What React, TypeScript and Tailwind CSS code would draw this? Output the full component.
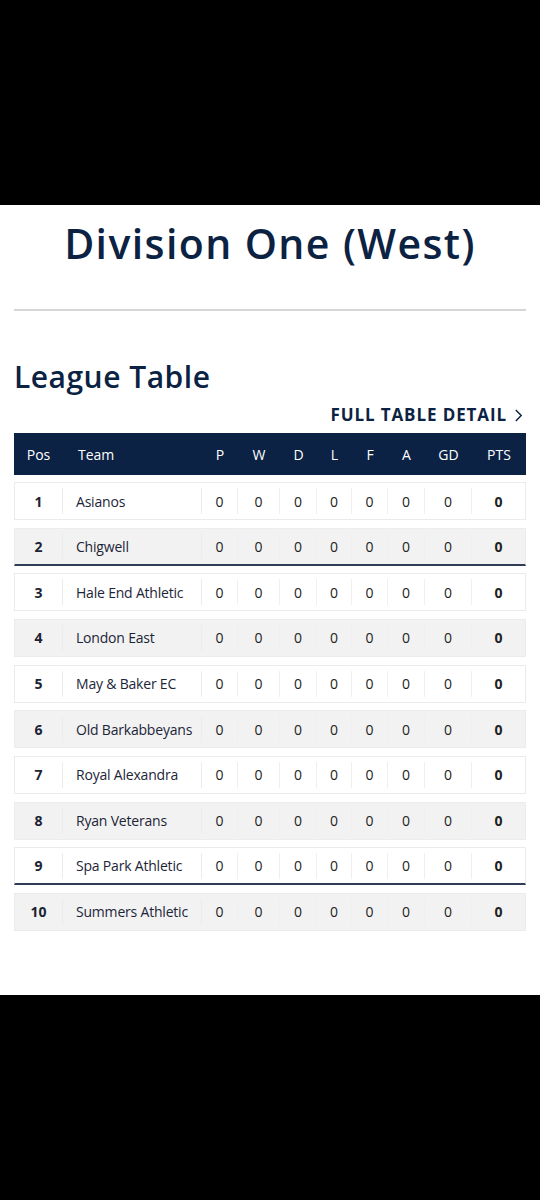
import React from "react";

const TEAMS = [
  "Asianos",
  "Chigwell",
  "Hale End Athletic",
  "London East",
  "May & Baker EC",
  "Old Barkabbeyans",
  "Royal Alexandra",
  "Ryan Veterans",
  "Spa Park Athletic",
  "Summers Athletic",
];

// column widths read off the reference: P W D L F A GD PTS
const STAT_COLS = [
  { key: "P", w: "w-[36px]" },
  { key: "W", w: "w-[42px]" },
  { key: "D", w: "w-[37px]" },
  { key: "L", w: "w-[35px]" },
  { key: "F", w: "w-[36px]" },
  { key: "A", w: "w-[37px]" },
  { key: "GD", w: "w-[47px]" },
  { key: "PTS", w: "flex-1" },
];

function Row({ pos, team }: { pos: number; team: string }) {
  const even = pos % 2 === 0;
  const lineBelow = pos === 2 || pos === 9;
  return (
    <div
      className={
        "flex h-[38px] items-center border text-[14px] " +
        (even ? "bg-[#f2f2f2] border-[#ececec] " : "bg-white border-[#ebebeb] ") +
        (lineBelow ? "border-b-2 border-b-[#2f3d57]" : "")
      }
    >
      <div className="w-[48px] h-[26px] flex items-center justify-center font-bold text-[#1c2333] border-r border-[#ececec]">
        {pos}
      </div>
      <div className="w-[139px] h-[26px] flex items-center pl-[13px] text-[#1c2538] tracking-[-0.2px] border-r border-[#ececec]">
        {team}
      </div>
      {STAT_COLS.map((c, i) => (
        <div
          key={c.key}
          className={
            c.w +
            " h-[26px] flex items-center justify-center text-[#222] " +
            (i < STAT_COLS.length - 1 ? "border-r border-[#efefef] " : "") +
            (c.key === "PTS" ? "font-bold" : "")
          }
        >
          0
        </div>
      ))}
    </div>
  );
}

export default function App() {
  return (
    <div
      className="bg-black h-[1200px] flex flex-col"
      style={{ fontFamily: '"Open Sans", "Noto Sans", sans-serif' }}
    >
      <div className="h-[205px]"></div>

      <section className="bg-white h-[790px] px-[14px]">
        <h1 className="pt-[14px] text-center text-[41px] leading-[48px] font-semibold text-[#0c2243] tracking-[1.4px]">
          Division One (West)
        </h1>

        <div className="mt-[42px] border-t-2 border-[#d6d6d6]"></div>

        <h2 className="mt-[48px] text-[30px] leading-[36px] font-semibold text-[#0c2243] tracking-[0.5px]">
          League Table
        </h2>

        <div className="mt-[10px] flex justify-end">
          <a className="flex items-center gap-[7px] pr-[3px] text-[17px] leading-[20px] font-bold tracking-[0.9px] text-[#0c2243]">
            FULL TABLE DETAIL
            <svg
              xmlns="http://www.w3.org/2000/svg"
              viewBox="0 0 10 16"
              className="w-[9px] h-[15px]"
              fill="none"
              stroke="currentColor"
              strokeWidth={1.6}
            >
              <path d="M2 2l6 6-6 6" />
            </svg>
          </a>
        </div>

        <div className="mt-[8px] flex h-[42px] items-center bg-[#0b2245] text-white text-[14px]">
          <div className="w-[49px] text-center">Pos</div>
          <div className="w-[139px] pl-[15px]">Team</div>
          {STAT_COLS.map((c) => (
            <div key={c.key} className={c.w + " text-center"}>
              {c.key}
            </div>
          ))}
        </div>

        <div className="mt-[7px] flex flex-col gap-[7.67px]">
          {TEAMS.map((t, i) => (
            <Row key={t} pos={i + 1} team={t} />
          ))}
        </div>
      </section>
    </div>
  );
}
